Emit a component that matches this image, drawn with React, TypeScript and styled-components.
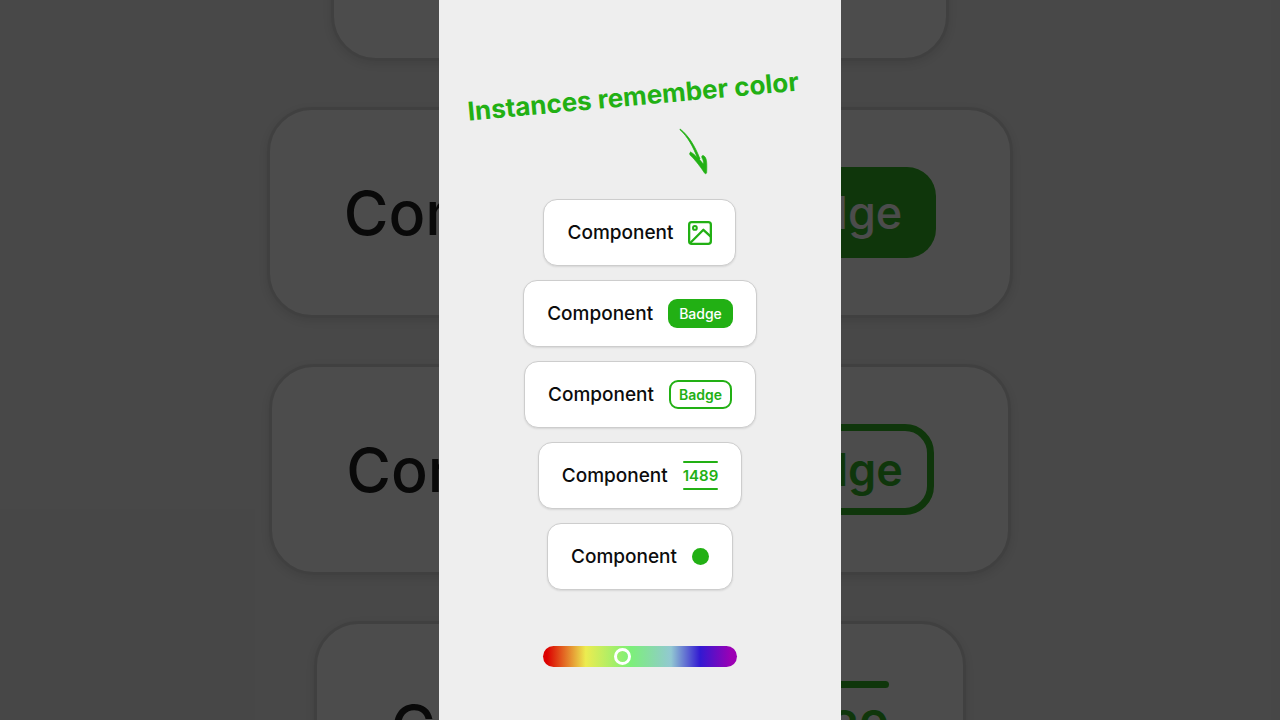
import React, { useState } from "react";
import styled, { createGlobalStyle, ThemeProvider } from "styled-components";

const GREEN = "#22b014";

const regular = {
  text: 19, line: 24, small: 14, count: 15, smallLine: 19, gap: 15, stackGap: 14,
  padY: 18, padX: 23, border: 1, borderColor: "#cdcdcd", radius: 14,
  chip: 29, chipPad: 11, chipRadius: 9, stroke: 2, icon: 24, dot: 17,
  shadow: "0 1px 2px rgba(0, 0, 0, 0.1)",
};

const large: typeof regular = {
  text: 61, line: 76, small: 45, count: 47, smallLine: 60, gap: 47, stackGap: 46,
  padY: 57, padX: 74, border: 3, borderColor: "#d4d4d4", radius: 45,
  chip: 91, chipPad: 34, chipRadius: 29, stroke: 7, icon: 76, dot: 54,
  shadow: "0 3px 8px rgba(0, 0, 0, 0.1)",
};

type Sized = { theme: typeof regular };

const GlobalStyle = createGlobalStyle`
  * { box-sizing: border-box; }
  body {
    margin: 0;
    background: #464646;
    font-family: Inter, "Liberation Sans", sans-serif;
  }
`;

const Page = styled.div`
  position: relative;
  display: flex;
  justify-content: center;
  min-height: 100vh;
  overflow: hidden;
`;

const Backdrop = styled.div`
  position: absolute;
  inset: 0;
  display: flex;
  flex-direction: column;
  align-items: center;
  overflow: hidden;
  background: #eeeeee;

  > ul { margin-top: -150px; }

  &::after {
    content: "";
    position: absolute;
    inset: 0;
    background: rgba(8, 8, 8, 0.725);
  }
`;

const Panel = styled.main`
  position: relative;
  display: flex;
  flex-direction: column;
  align-items: center;
  width: 100%;
  max-width: 402px;
  padding: 80px 0 52px;
  background: #eeeeee;
`;

const Title = styled.h1`
  margin: 0;
  padding-right: 14px;
  color: ${GREEN};
  font-size: 26px;
  font-weight: 700;
  line-height: 32px;
  white-space: nowrap;
  transform: rotate(-5.2deg);
`;

const Arrow = styled.svg`
  width: 30px;
  height: 48px;
  margin: 16px 0 23px 108px;
`;

const Stack = styled.ul`
  display: flex;
  flex-direction: column;
  align-items: center;
  gap: ${({ theme }: Sized) => theme.stackGap}px;
  margin: 0;
  padding: 0;
  list-style: none;
`;

const Card = styled.li`
  display: flex;
  align-items: center;
  gap: ${({ theme }: Sized) => theme.gap}px;
  padding: ${({ theme }: Sized) => `${theme.padY}px ${theme.padX}px`};
  border: ${({ theme }: Sized) => `${theme.border}px solid ${theme.borderColor}`};
  border-radius: ${({ theme }: Sized) => theme.radius}px;
  background: #ffffff;
  box-shadow: ${({ theme }: Sized) => theme.shadow};
  color: #0c0c0c;
  font-size: ${({ theme }: Sized) => theme.text}px;
  font-weight: 500;
  line-height: ${({ theme }: Sized) => theme.line}px;
  white-space: nowrap;
`;

const Slot = styled.span`
  display: flex;
  align-items: center;
  height: ${({ theme }: Sized) => theme.chip}px;
  color: ${GREEN};
`;

const Badge = styled.span<{ $outline?: boolean }>`
  display: flex;
  align-items: center;
  height: ${({ theme }: Sized) => theme.chip}px;
  padding: 0 ${({ theme, $outline }) => theme.chipPad - ($outline ? theme.stroke + theme.border : 0)}px;
  border: ${({ theme, $outline }) => ($outline ? `${theme.stroke}px solid ${GREEN}` : "0")};
  border-radius: ${({ theme }: Sized) => theme.chipRadius}px;
  background: ${({ $outline }) => ($outline ? "transparent" : GREEN)};
  color: ${({ $outline }) => ($outline ? GREEN : "#ffffff")};
  font-size: ${({ theme }: Sized) => theme.small}px;
  font-weight: ${({ $outline }) => ($outline ? 600 : 500)};
  line-height: ${({ theme }: Sized) => theme.smallLine}px;
`;

const Count = styled.span`
  display: flex;
  flex-direction: column;
  justify-content: space-between;
  height: ${({ theme }: Sized) => theme.chip}px;
  color: ${GREEN};
  font-size: ${({ theme }: Sized) => theme.count}px;
  font-weight: 600;
  line-height: ${({ theme }: Sized) => theme.smallLine}px;

  &::before,
  &::after {
    content: "";
    height: ${({ theme }: Sized) => theme.stroke}px;
    border-radius: ${({ theme }: Sized) => theme.stroke}px;
    background: ${GREEN};
  }
`;

const Dot = styled.span`
  width: ${({ theme }: Sized) => theme.dot}px;
  height: ${({ theme }: Sized) => theme.dot}px;
  border-radius: 50%;
  background: ${GREEN};
`;

const Picture = styled.svg`
  width: ${({ theme }: Sized) => theme.icon}px;
  height: ${({ theme }: Sized) => theme.icon}px;
`;

const HueSlider = styled.input`
  appearance: none;
  width: 194px;
  height: 21px;
  margin: 56px 0 0;
  border-radius: 11px;
  background: linear-gradient(
    90deg,
    #dc0000 2%,
    #ecec50 22%,
    #7cf078 45%,
    #92c8d2 66%,
    #3219d2 81%,
    #9c00b4 97%
  );
  cursor: pointer;

  &::-webkit-slider-thumb {
    appearance: none;
    width: 17px;
    height: 17px;
    border: 3px solid #ffffff;
    border-radius: 50%;
    background: transparent;
  }
`;

function ImageIcon() {
  return (
    <Picture viewBox="0 0 24 24" fill="none" stroke="currentColor" strokeWidth="2.3" strokeLinejoin="round" aria-hidden="true">
      <rect x="1.15" y="1.15" width="21.7" height="21.7" rx="2.6" />
      <circle cx="6.9" cy="6.9" r="1.9" strokeWidth="2" />
      <path d="M2.2 22L15.4 8.8L22.8 15.6" />
    </Picture>
  );
}

function Cards() {
  return (
    <Stack>
      <Card>Component<Slot><ImageIcon /></Slot></Card>
      <Card>Component<Badge>Badge</Badge></Card>
      <Card>Component<Badge $outline>Badge</Badge></Card>
      <Card>Component<Count>1489</Count></Card>
      <Card>Component<Slot><Dot /></Slot></Card>
    </Stack>
  );
}

export default function App() {
  const [hue, setHue] = useState(40);

  return (
    <Page>
      <GlobalStyle />
      <ThemeProvider theme={large}>
        <Backdrop aria-hidden="true"><Cards /></Backdrop>
      </ThemeProvider>
      <ThemeProvider theme={regular}>
        <Panel>
          <Title>Instances remember color</Title>
          <Arrow viewBox="0 0 30 48" fill={GREEN} stroke={GREEN} strokeLinecap="round" strokeLinejoin="round" aria-hidden="true">
            <path d="M1.3 1.2C9 7 15.5 17 21 31L19 31.5C14 18 8.5 8.5 1.3 2Z" strokeWidth="0.8" />
            <path
              d="M11.6 24.2C13.5 24.3 16.5 28 20.6 31.5C22.5 34 23.6 35 24.5 36C24.7 34 24 31.5 22.9 29.8C22.3 28 23.4 27 24.8 27.8C27.6 29.7 28.2 33.5 27.7 44.5C27.4 46 26 46 25.5 45C22.5 40.5 17 32.5 11.2 27.2C10.2 26 10.5 24.5 11.6 24.2Z"
              strokeWidth="0.6"
            />
          </Arrow>
          <Cards />
          <HueSlider
            type="range"
            min={0}
            max={100}
            value={hue}
            aria-label="Hue"
            onChange={(event) => setHue(Number(event.target.value))}
          />
        </Panel>
      </ThemeProvider>
    </Page>
  );
}
